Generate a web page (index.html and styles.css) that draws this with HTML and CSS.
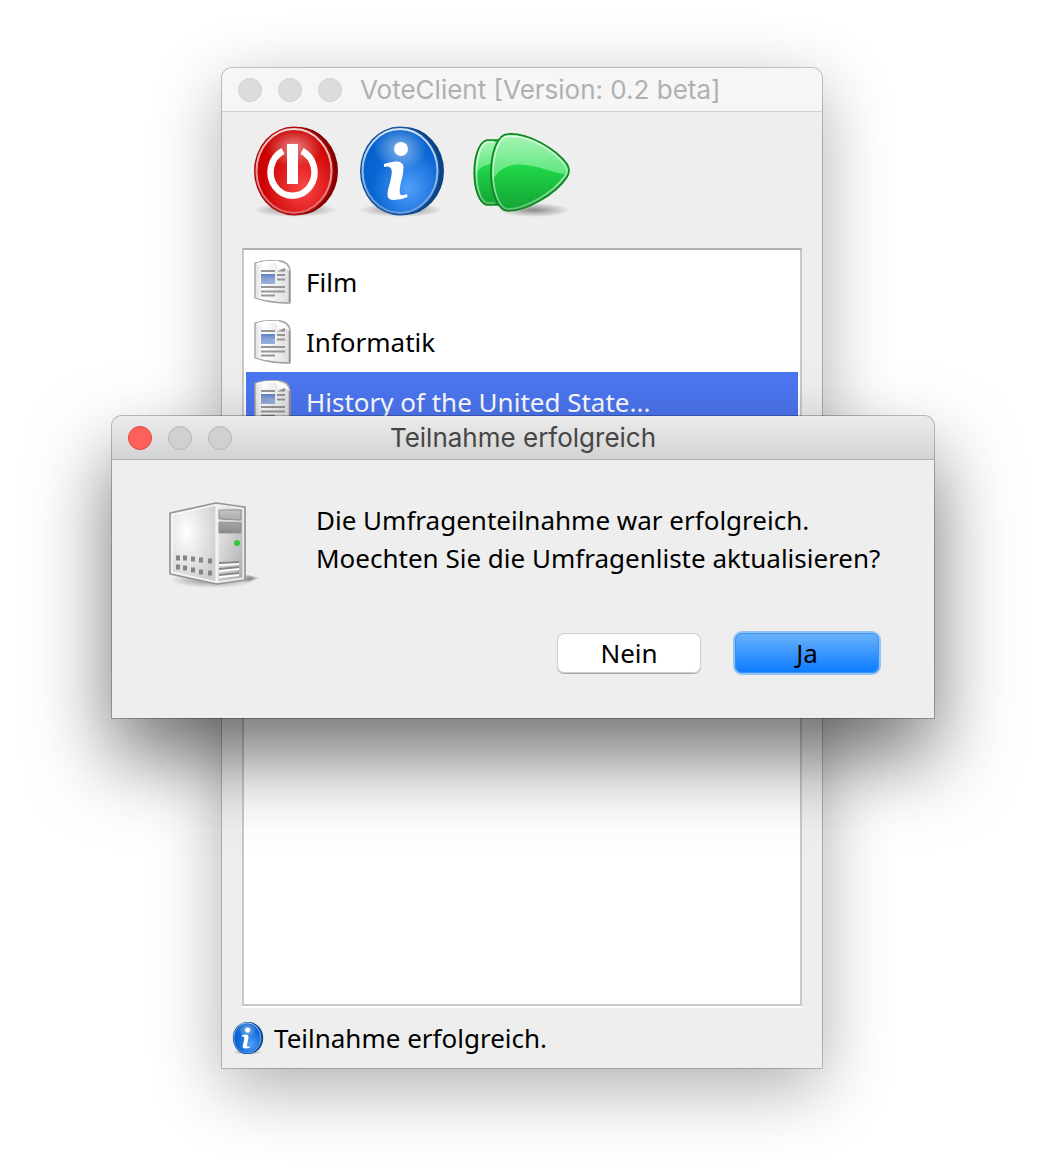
FILE: index.html
```
<!DOCTYPE html>
<html lang="de">
<head>
<meta charset="utf-8">
<meta name="viewport" content="width=device-width, initial-scale=1">
<title>VoteClient</title>
<link rel="stylesheet" href="styles.css">
</head>
<body>
<svg class="defs" aria-hidden="true">
  <defs>
    <radialGradient id="blue" cx="62%" cy="70%" r="65%"><stop offset="0" stop-color="#519ffa"/><stop offset=".75" stop-color="#0865d3"/><stop offset="1" stop-color="#0562cf"/></radialGradient>
    <radialGradient id="red" cx="62%" cy="70%" r="65%"><stop offset="0" stop-color="#fa4848"/><stop offset=".8" stop-color="#cf0404"/><stop offset="1" stop-color="#cb0000"/></radialGradient>
    <radialGradient id="shine"><stop offset="0" stop-color="#fff" stop-opacity=".5"/><stop offset="1" stop-color="#fff" stop-opacity="0"/></radialGradient>
    <radialGradient id="shade"><stop offset="0" stop-opacity=".42"/><stop offset="1" stop-opacity="0"/></radialGradient>
    <linearGradient id="rim" x1="0" y1="0" x2="0" y2="1"><stop offset="0" stop-color="#fff" stop-opacity=".85"/><stop offset="1" stop-color="#fff" stop-opacity=".35"/></linearGradient>
    <linearGradient id="green" x1="0" y1="0" x2="0" y2="1"><stop offset=".35" stop-color="#20dc4a"/><stop offset="1" stop-color="#14a234"/></linearGradient>
    <linearGradient id="gloss" x1="0" y1="0" x2="0" y2="1"><stop offset="0" stop-color="#a5f4b5"/><stop offset="1" stop-color="#56e577"/></linearGradient>
    <linearGradient id="paper" x1="0" y1="0" x2="1" y2="0"><stop offset="0" stop-color="#e0e0e0"/><stop offset=".25" stop-color="#fff"/><stop offset="1" stop-color="#dcdcdc"/></linearGradient>
    <linearGradient id="photo" x1="0" y1="0" x2="0" y2="1"><stop offset="0" stop-color="#5f82c4"/><stop offset="1" stop-color="#b4c8ea"/></linearGradient>
    <radialGradient id="side" cx="32%" cy="35%" r="75%"><stop offset="0" stop-color="#fff"/><stop offset="1" stop-color="#cecece"/></radialGradient>
    <linearGradient id="front" x1="0" y1="0" x2="1" y2="1"><stop offset="0" stop-color="#f0f0f0"/><stop offset="1" stop-color="#ababab"/></linearGradient>
    <linearGradient id="bay" x1="0" y1="0" x2="0" y2="1"><stop offset="0" stop-color="#c4c4c4"/><stop offset="1" stop-color="#8a8a8a"/></linearGradient>
    <symbol id="info" viewBox="0 0 88 94">
      <ellipse cx="43" cy="86" rx="42" ry="7" fill="url(#shade)"/>
      <ellipse cx="46" cy="47" rx="40" ry="44" fill="#0b4387"/>
      <ellipse cx="42" cy="47" rx="40" ry="44.500" fill="#0e4f9f"/>
      <ellipse cx="42" cy="47" rx="37.500" ry="42" fill="url(#blue)" stroke="url(#rim)" stroke-width="2"/>
      <ellipse cx="42" cy="24" rx="27" ry="22" fill="url(#shine)"/>
      <circle cx="43" cy="25" r="7" fill="#fff"/>
      <path d="M26 40 Q31 38 37 37.500 Q45 37 45.500 43 C45.500 50 44 53 43 58 Q41 66 42 70.500 Q45 72 49 70 L49.500 73 Q43 76 36 76 Q29 76 29.500 70 C30 64 32 60 33 54 Q35 45 32 43.500 Q30 42 26 43Z" fill="#fff"/>
    </symbol>
    <symbol id="page" viewBox="0 0 40 46">
      <path d="M4 41 L36 38 L40 42 L35 45Z" fill="url(#shade)" opacity=".6"/>
      <path d="M2 4 Q13 .5 27 2 Q36 3 37 11 V44 Q24 44 14 42 Q8 41 2 39Z" fill="url(#paper)" stroke="#a0a0a0" stroke-width="1.300"/>
      <path d="M36.500 12V43" stroke="#909090" stroke-width="1.600"/>
      <path d="M4 5 Q14 2 26 3" stroke="#fff" stroke-width="2" fill="none"/>
      <path d="M21 3 Q26 5 24 10 Q31 8 36 11 Q33 4 27 3Z" fill="#fff"/>
      <path d="M8 12H22M24 16H32M24 20.500H32M8 28H32M8 32.500H32M8 36.500H22" stroke="#969696" stroke-width="1.800"/>
      <path d="M24 12.500L32 9V12.500Z" fill="#909090"/>
      <path d="M8 15H22V25H8Z" fill="url(#photo)"/>
      <path d="M8 20Q12 22 15 20Q17 23 22 22V25H8Z" fill="#7f9bd0" opacity=".5"/>
    </symbol>
  </defs>
</svg>

<div class="desktop">
  <main class="window main-window">
    <header class="titlebar inactive">
      <div class="lights"><span class="light"></span><span class="light"></span><span class="light"></span></div>
      <h1 class="title main-title">VoteClient [Version: 0.2 beta]</h1>
    </header>
    <nav class="toolbar" aria-label="Werkzeuge">
      <button class="tool" type="button" aria-label="Beenden">
        <svg class="tool-icon" viewBox="0 0 88 94">
          <ellipse cx="43" cy="86" rx="42" ry="7" fill="url(#shade)"/>
          <ellipse cx="46" cy="47" rx="40" ry="44" fill="#850000"/>
          <ellipse cx="42" cy="47" rx="40" ry="44.500" fill="#ae0808"/>
          <ellipse cx="42" cy="47" rx="37.500" ry="42" fill="url(#red)" stroke="url(#rim)" stroke-width="2"/>
          <ellipse cx="42" cy="23" rx="29" ry="20" fill="url(#shine)"/>
          <path d="M31 27 A22 23.500 0 1 0 50 27" fill="none" stroke="#fff" stroke-width="6.500"/>
          <rect x="35" y="20" width="11" height="40" fill="#fff"/>
        </svg>
      </button>
      <button class="tool" type="button" aria-label="Info">
        <svg class="tool-icon"><use href="#info"/></svg>
      </button>
      <button class="tool tool-wide" type="button" aria-label="Teilnehmen">
        <svg class="arrow-icon" viewBox="0 0 100 94">
          <ellipse cx="62" cy="86" rx="36" ry="7" fill="url(#shade)"/>
          <path d="M15 16 H27 V81 H15 C-2 77 -2 20 15 16Z" fill="url(#green)" stroke="#108720" stroke-width="1.700"/>
          <path d="M15 18 H27 V40 Q10 38 4 50 Q4 23 15 18Z" fill="url(#gloss)"/>
          <path d="M22 18 H15 C1 22 1 75 15 79 H23" fill="none" stroke="url(#rim)" stroke-width="1.700"/>
          <path d="M36 10 C57 9 84 25 95 40 Q99 47 95 53 C84 70 55 87 36 87 C26 87 19 68 19 49 C19 29 25 10 36 10Z" fill="url(#green)" stroke="#108720" stroke-width="1.700"/>
          <path d="M36 12 C56 11 82 26 93 42 Q95 46 93 50 C75 49 39 26 21 55 C20 32 27 12 36 12Z" fill="url(#gloss)"/>
          <path d="M36 12 C57 11 82 26 93 41 Q97 47 93 52 C82 68 54 85 36 85 C28 85 21 68 21 49 C21 30 27 12 36 12Z" fill="none" stroke="url(#rim)" stroke-width="1.700"/>
        </svg>
      </button>
    </nav>
    <ul class="survey-list" role="listbox" aria-label="Umfragen">
      <li class="survey" role="option" aria-selected="false"><svg class="page-icon"><use href="#page"/></svg>Film</li>
      <li class="survey" role="option" aria-selected="false"><svg class="page-icon"><use href="#page"/></svg>Informatik</li>
      <li class="survey selected" role="option" aria-selected="true"><svg class="page-icon"><use href="#page"/></svg>History of the United State...</li>
    </ul>
    <footer class="status"><svg class="status-icon"><use href="#info"/></svg>Teilnahme erfolgreich.</footer>
  </main>

  <section class="window dialog" role="dialog" aria-labelledby="dialog-title">
    <header class="titlebar">
      <div class="lights"><button class="light close" type="button" aria-label="Schließen"></button><span class="light"></span><span class="light"></span></div>
      <h2 class="title" id="dialog-title">Teilnahme erfolgreich</h2>
    </header>
    <div class="message">
      <svg class="server-icon" viewBox="0 0 96 96">
        <ellipse cx="49" cy="84" rx="43" ry="8" fill="url(#shade)"/>
        <path d="M76 77 L96 82 L78 88Z" fill="url(#shade)"/>
        <path d="M6 17 L52 7 L81 11 V84 L53 88 L6 78Z" fill="#e8e8e8" stroke="#969696" stroke-width="1.700" stroke-linejoin="round"/>
        <path d="M8 19 L52 9 V86 L8 76Z" fill="url(#side)" stroke="#fff"/>
        <path d="M54 9 L79 13 V82 L54 86Z" fill="url(#front)" stroke="#f4f4f4"/>
        <path d="M55 14 H77 V24 L55 23ZM55 26 L77 27 V37 H55Z" fill="url(#bay)" stroke="#929292"/>
        <path d="M55 68L75 67M55 74L75 72M55 80L75 78" stroke="#fff" stroke-width="4"/>
        <path d="M55 67L75 66M55 73L75 71M55 79L75 77" stroke="#858585" stroke-width="2"/>
        <path d="M12 62h4M19 62h4M27 63h4M35 64h4M44 65h4M12 71h4M19 72h4M27 74h4M35 76h4M44 77h4" stroke="#858585" stroke-width="5"/>
        <circle cx="73" cy="47" r="3" fill="#30c83c"/>
      </svg>
      <p class="message-text">Die Umfragenteilnahme war erfolgreich.<br>Moechten Sie die Umfragenliste aktualisieren?</p>
    </div>
    <div class="actions">
      <button class="button" type="button">Nein</button>
      <button class="button primary" type="button">Ja</button>
    </div>
  </section>
</div>
</body>
</html>
```
FILE: styles.css
```
* { box-sizing: border-box; }

body {
  margin: 0;
  background: #fff;
  color: #000;
  font-family: "Noto Sans", "Open Sans", sans-serif;
  font-size: 26px;
  line-height: 38px;
}

button { font: inherit; color: inherit; }
svg { display: block; flex: none; }
.defs { position: absolute; width: 0; height: 0; }

/* Both windows share one grid cell, so the dialog lies over the main window. */
.desktop {
  display: grid;
  grid-template-columns: minmax(0, 1fr);
  justify-items: center;
  min-height: 100vh;
  padding: 68px 24px 100px;
  overflow: hidden;
}

.window {
  grid-area: 1 / 1;
  width: 100%;
  background: #eee;
  border-radius: 10px 10px 0 0;
}

.main-window {
  display: flex;
  flex-direction: column;
  max-width: 600px;
  margin-right: 2px;
  box-shadow: 0 0 0 1px rgba(0, 0, 0, .2), 0 20px 70px rgba(0, 0, 0, .32);
}

.dialog {
  align-self: start;
  max-width: 822px;
  margin-top: 348px;
  box-shadow: 0 0 0 1px rgba(0, 0, 0, .25), 0 40px 80px rgba(0, 0, 0, .55);
}

.titlebar {
  display: grid;
  grid-template-columns: 1fr auto 1fr;
  align-items: center;
  height: 44px;
  padding: 0 16px;
  border-bottom: 1px solid #b1b1b1;
  border-radius: 10px 10px 0 0;
  background: linear-gradient(#ebebeb, #d3d3d3);
  color: #464646;
}

.titlebar.inactive {
  grid-template-columns: auto 1fr;
  column-gap: 18px;
  border-color: #d0d0d0;
  background: #f6f6f6;
  color: #b0b0b0;
}

.title {
  margin: 0;
  font: 400 26px/32px Inter, sans-serif;
  white-space: nowrap;
}

.lights { display: flex; gap: 16px; }

.light {
  width: 24px;
  height: 24px;
  padding: 0;
  border: 1px solid #b5b5b5;
  border-radius: 50%;
  background: #d0d0d0;
}

.inactive .light { border-color: #d0d0d0; background: #ddd; }
.light.close { border-color: #e2463f; background: #fe605b; }

.toolbar {
  display: flex;
  gap: 18px;
  padding: 12px 30px 30px;
}

.tool { padding: 0; border: 0; background: none; }
.tool-wide { padding-left: 8px; }
.tool-icon { width: 88px; height: 94px; }
.arrow-icon { width: 100px; height: 94px; }

.survey-list {
  flex: 1;
  margin: 0 20px;
  padding: 2px;
  border: 2px solid #c8c8c8;
  border-top-color: #b0b0b0;
  background: #fff;
  box-shadow: 0 2px #fff;
  list-style: none;
}

.survey {
  display: flex;
  align-items: center;
  gap: 13px;
  height: 60px;
  padding-left: 7px;
}

.survey.selected { background: #4c76f0; color: #fff; }
.page-icon { width: 40px; height: 46px; }

.status {
  display: flex;
  align-items: center;
  gap: 10px;
  height: 60px;
  margin-top: 2px;
  padding-left: 10px;
}

.status-icon { width: 32px; height: 34px; }

.message {
  display: flex;
  align-items: flex-start;
  gap: 56px;
  padding: 36px 24px 0 52px;
}

.server-icon { width: 96px; height: 96px; }
.message-text { margin: 5px 0 0; }

.actions {
  display: flex;
  justify-content: flex-end;
  gap: 34px;
  padding: 41px 55px 45px;
}

.button {
  width: 144px;
  height: 40px;
  padding: 0;
  border: 0;
  border-radius: 7px;
  background: #fff;
  line-height: 36px;
  box-shadow: inset 0 0 0 1px #ccc, 0 1px #aaa;
}

.button.primary {
  background: linear-gradient(#6bb3fa, #0a7aff);
  box-shadow: inset 0 0 0 1px #3b93f8, 0 0 0 2px #93c2f5;
}
```
